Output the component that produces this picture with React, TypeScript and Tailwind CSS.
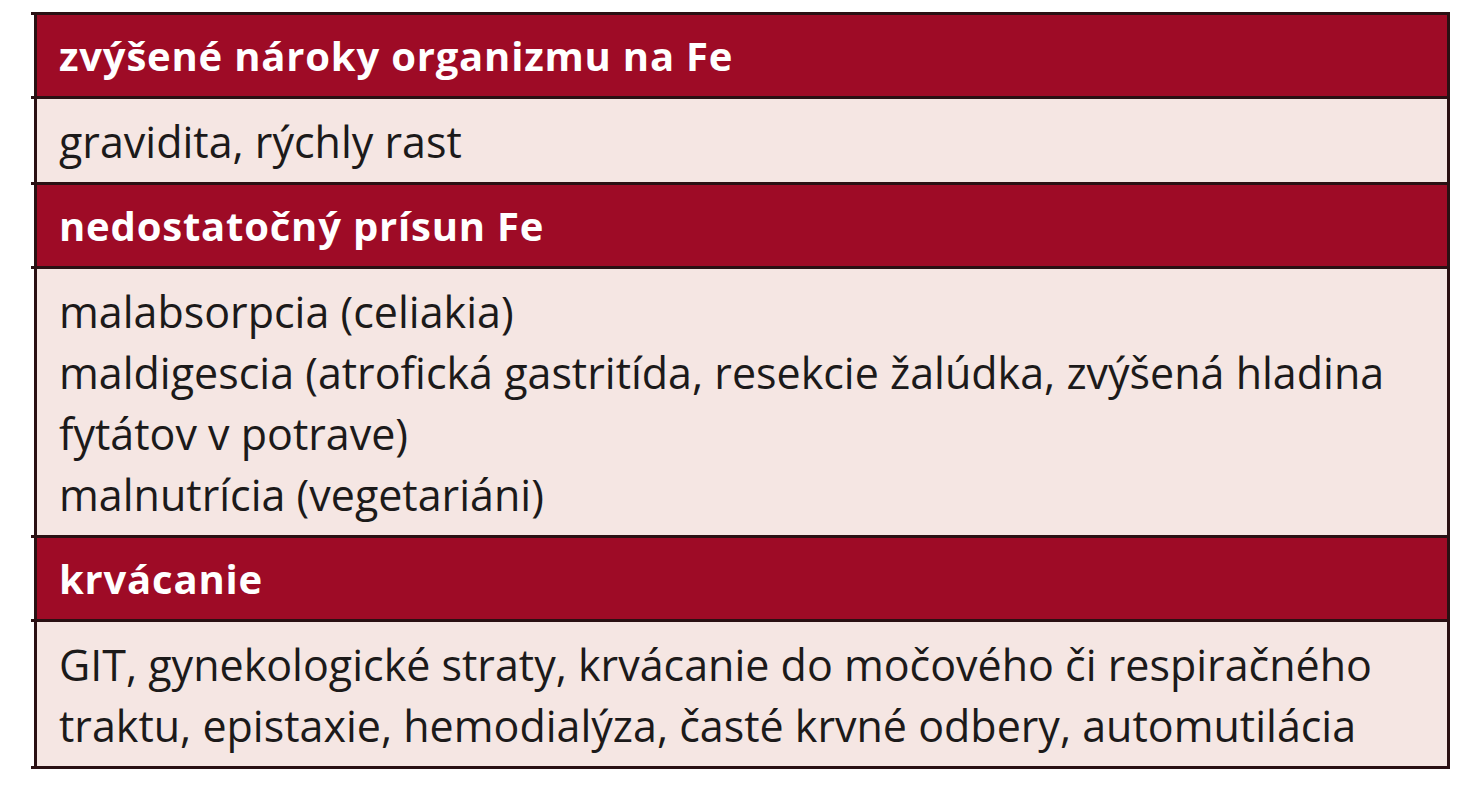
import React from 'react';

type Section = { title: string; lines: string[] };

const sections: Section[] = [
  { title: 'zvýšené nároky organizmu na Fe', lines: ['gravidita, rýchly rast'] },
  {
    title: 'nedostatočný prísun Fe',
    lines: [
      'malabsorpcia (celiakia)',
      'maldigescia (atrofická gastritída, resekcie žalúdka, zvýšená hladina',
      'fytátov v potrave)',
      'malnutrícia (vegetariáni)',
    ],
  },
  {
    title: 'krvácanie',
    lines: [
      'GIT, gynekologické straty, krvácanie do močového či respiračného',
      'traktu, epistaxie, hemodialýza, časté krvné odbery, automutilácia',
    ],
  },
];

const Rule = () => <div className="h-[3px] bg-[#2a1013]" />;

const App: React.FC = () => {
  return (
    <div className="w-[1462px] h-[800px] bg-white pt-[12px] pl-[31px] font-['Open_Sans',sans-serif]">
      <div className="w-[1419px]">
        {sections.map((s) => (
          <div key={s.title}>
            <Rule />
            <div className="ml-[3px] border-x-[3px] border-[#2a1013] bg-[#9e0b26] px-[22px] py-[10px] text-[40px] leading-[61px] font-bold tracking-[0.02em] text-white">
              {s.title}
            </div>
            <Rule />
            <div className="ml-[3px] border-x-[3px] border-[#2a1013] bg-[#f5e6e3] px-[22px] pt-[12px] pb-[10px] text-[43px] leading-[61px] text-[#1c1a1a]">
              {s.lines.map((l) => (
                <div key={l}>{l}</div>
              ))}
            </div>
          </div>
        ))}
        <Rule />
      </div>
    </div>
  );
};

export default App;
